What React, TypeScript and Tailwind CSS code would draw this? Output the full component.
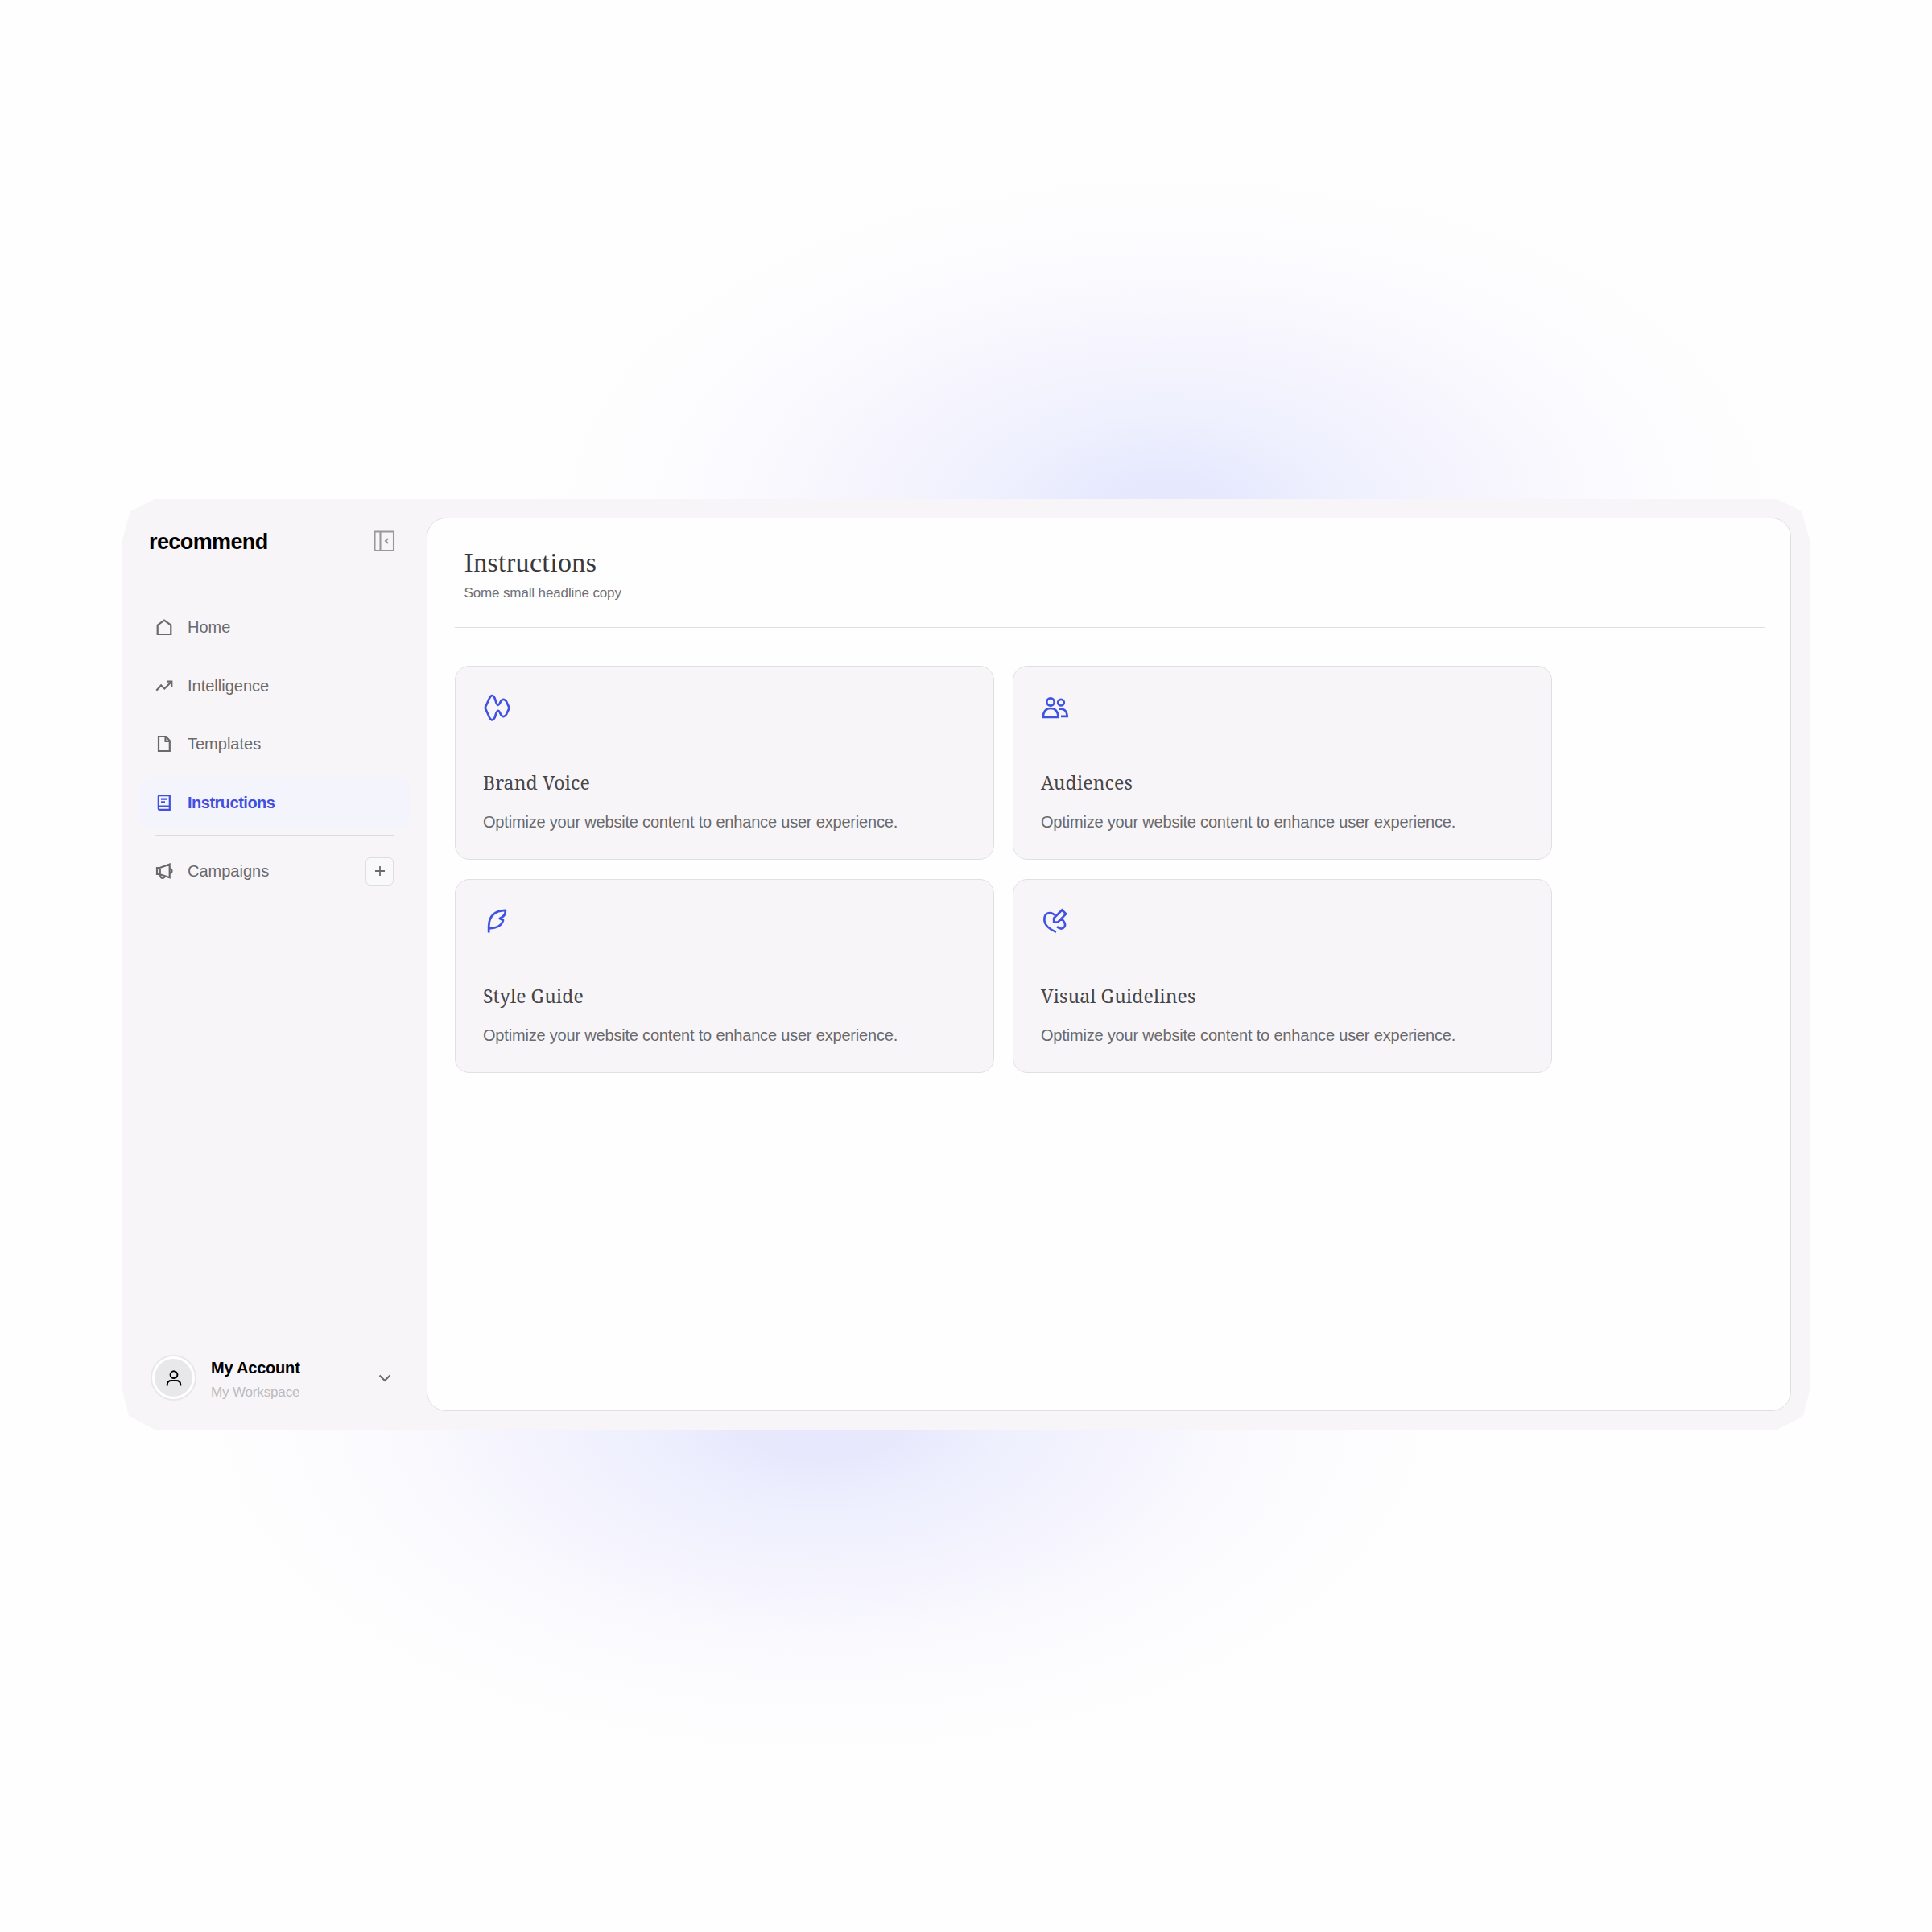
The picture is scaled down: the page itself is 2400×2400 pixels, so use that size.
import React from 'react';

type IconProps = { children: React.ReactNode; viewBox?: string; className?: string };

function Icon({ children, viewBox = '0 0 24 24', className = 'size-6 stroke-[2.2]' }: IconProps) {
  return (
    <svg viewBox={viewBox} fill="none" stroke="currentColor" className={`block shrink-0 overflow-visible ${className}`}>
      {children}
    </svg>
  );
}

const nav = [
  { label: 'Home', active: false, icon: <path d="M3.7 9.6 12 3.6l8.3 6V21H3.7z" /> },
  { label: 'Intelligence', active: false, icon: <path d="m2.3 17.8 5.8-6.4 4.2 4.1L21 7M15 6.6h6.3V13" /> },
  { label: 'Templates', active: false, icon: <path d="M5 3h9.2l4.6 5.2V21H5zM13.5 3v6H19" /> },
  {
    label: 'Instructions',
    active: true,
    icon: <path d="M18.8 3.2H6.5Q4.8 3.2 4.8 5v14.5q.2 1.3 1.7 1.3h12.3zM4.800 18.500q.2-1.900 1.700-1.900h12.300M8 7.600h8M8 11.400h5" />,
  },
];

const cards = [
  {
    title: 'Brand Voice',
    viewBox: '30 33 108 108',
    stroke: 'stroke-[8]',
    icon: (
      <path
        strokeLinejoin="round"
        d="M38 88 54 52Q64 32 74 52L79 68Q86 86 93 70L97 62Q107 50 117 64L128 88 117 112Q107 128 97 114L93 106Q86 90 79 108L74 124Q64 142 54 124Z"
      />
    ),
  },
  {
    title: 'Audiences',
    viewBox: '39 33 108 108',
    stroke: 'stroke-[8]',
    icon: (
      <>
        <circle cx="75" cy="66" r="14" />
        <circle cx="114" cy="68" r="11.500" />
        <path d="M47.500 122.500h56Q102 90 75.500 90T47.500 122.500ZM105 92.500Q135 88 137 119.500H114" />
      </>
    ),
  },
  {
    title: 'Style Guide',
    viewBox: '0 0 36 36',
    stroke: 'stroke-[2.8]',
    icon: <path strokeLinejoin="round" d="M7.200 32.500V24Q8 5.500 27.800 4.800 28.500 11.500 20.800 15L25 17Q22.500 27 7.500 27.300" />,
  },
  {
    title: 'Visual Guidelines',
    viewBox: '39 33 108 108',
    stroke: 'stroke-[8]',
    icon: (
      <path d="M96 128Q51 110 52 80 54 54 78 58 86 60 91 66M87.500 92V77L118 46.500 132.500 61 102 92ZM117 80Q133 94 128 108 116 124 99 108" />
    ),
  },
];

function Glow() {
  return (
    <>
      <div className="absolute top-[200px] left-[660px] h-[880px] w-[1580px] bg-[radial-gradient(closest-side,#e4e6fe_0%,#e7eafe_12%,#eff1fe_30%,#f5f4fe_46%,#f9f8fe_60%,#fdfcfe_82%,#fefefe00_100%)]" />
      <div className="absolute top-[1310px] left-[240px] h-[880px] w-[1560px] bg-[radial-gradient(closest-side,#e6e6fd_0%,#e8e8fd_14%,#eef0fe_30%,#f5f4fe_50%,#fafafe_68%,#fdfcfe_86%,#fefefe00_100%)]" />
    </>
  );
}

function Sidebar() {
  return (
    <aside className="flex h-full w-[378px] shrink-0 flex-col text-[20px] text-[#6a696c]">
      <div className="flex items-start justify-between pt-[38px] pr-[40px] pl-[33px]">
        <div className="text-[27px] leading-[30px] font-bold tracking-[-0.6px] text-black">recommend</div>
        <Icon viewBox="0 0 26 26" className="mt-px size-[26px] stroke-[2.1] text-[#99989b]">
          <path d="M1.500 1.500h23.500V25H1.500zM8.500 1.500V25M18 10l-3 3 3 3" />
        </Icon>
      </div>

      <nav className="mt-[59px] flex flex-col gap-[9px] px-[21px]">
        {nav.map((n) => (
          <a
            key={n.label}
            className={`flex h-[63.750px] items-center gap-[17px] rounded-2xl pl-[19px] leading-6 ${
              n.active ? 'bg-[#f4f4fd] font-bold tracking-[-0.5px] text-[#3f50e0]' : ''
            }`}
          >
            <Icon>{n.icon}</Icon>
            {n.label}
          </a>
        ))}
      </nav>

      <div className="mx-10 mt-[8px] h-[1.500px] bg-[#dcdbde]" />

      <div className="mt-[26px] flex items-center pr-[41px] pl-10 leading-6">
        <Icon>
          <path d="M3 8h3.500L18.700 3.600V20.200L6.500 16H3zM6.800 8v8M18.700 8.500q2.800 1 2.800 3.500t-2.800 3.400M6.700 16.500q.8 4.300 3.500 4.500 2.300-.300 2.500-3" />
        </Icon>
        <span className="ml-[17px] flex-1">Campaigns</span>
        <span className="flex size-[35px] items-center justify-center rounded-md border border-[#dedde0] bg-[#f9f8fb]">
          <Icon viewBox="0 0 14 14" className="size-3.5 stroke-[1.8]">
            <path d="M7 1v12M1 7h12" />
          </Icon>
        </span>
      </div>

      <div className="mt-auto mb-[35px] flex items-center pr-[45px] pl-[35px]">
        <span className="flex size-[57px] items-center justify-center rounded-full border-2 border-[#e8e7ea] bg-white">
          <span className="flex size-[47px] items-center justify-center rounded-full bg-[#e8e7e9] text-black">
            <Icon viewBox="0 0 20 20" className="size-5 stroke-2">
              <circle cx="10" cy="5.700" r="4.400" />
              <path d="M1.700 19.500v-1.500Q2 13 7 13h6q5 0 5.300 5v1.500" />
            </Icon>
          </span>
        </span>
        <span className="relative top-px ml-[18px] flex-1 pt-1">
          <span className="block leading-6 font-bold tracking-[-0.2px] text-black">My Account</span>
          <span className="mt-[7px] block text-[17px] leading-6 tracking-[-0.15px] text-[#bbbabd]">My Workspace</span>
        </span>
        <Icon viewBox="0 0 14 14" className="size-3.5 stroke-2">
          <path d="m.5 3.500 6.500 6.500 6.500-6.500" />
        </Icon>
      </div>
    </aside>
  );
}

function Main() {
  return (
    <main className="mt-[23px] h-[1110px] w-[1695px] rounded-3xl border-[1.500px] border-[#e0dfe3] bg-[#fefefe] pr-[32px] pl-[34px]">
      <header className="h-[136px] border-b-[1.500px] border-[#dfdee2] pt-[35px] pl-[11.500px]">
        <h1 className="font-['Liberation_Serif',serif] text-[34px] leading-10 tracking-[0.350px] text-[#3a393c]">Instructions</h1>
        <p className="mt-[6px] text-[17px] leading-6 tracking-[-0.130px] text-[#716f74]">Some small headline copy</p>
      </header>
      <div className="mt-[47px] grid grid-cols-[669.5px_669.5px] gap-x-[23.5px] gap-y-6">
        {cards.map((c) => (
          <section key={c.title} className="h-[241px] rounded-[18px] border-[1.500px] border-[#e0dfe3] bg-[#f7f5f8] pt-[33px] pl-[34px]">
            <Icon viewBox={c.viewBox} className={`size-9 text-[#4052e2] ${c.stroke}`}>
              {c.icon}
            </Icon>
            <h2 className="mt-[58px] font-['Noto_Serif','Liberation_Serif',serif] text-[23px] leading-[34px] tracking-[0.1px] text-[#464548]">{c.title}</h2>
            <p className="mt-[20px] text-[20px] leading-6 tracking-[-0.190px] whitespace-nowrap text-[#6a696c]">
              Optimize your website content to enhance user experience.
            </p>
          </section>
        ))}
      </div>
    </main>
  );
}

export default function App() {
  return (
    <div className="relative h-[2400px] w-[2400px] overflow-hidden bg-[#fefefe] pt-[620px] pl-[152px] font-['Liberation_Sans',Arial,sans-serif]">
      <Glow />
      <div className="relative flex h-[1156px] w-[2096px] bg-[#f7f5f8] [clip-path:polygon(40px_0,10px_15px,0_50px,0_1108px,8px_1139px,40px_1156px,2056px_1156px,2088px_1139px,2096px_1108px,2096px_50px,2086px_15px,2056px_0)]">
        <Sidebar />
        <Main />
      </div>
    </div>
  );
}
